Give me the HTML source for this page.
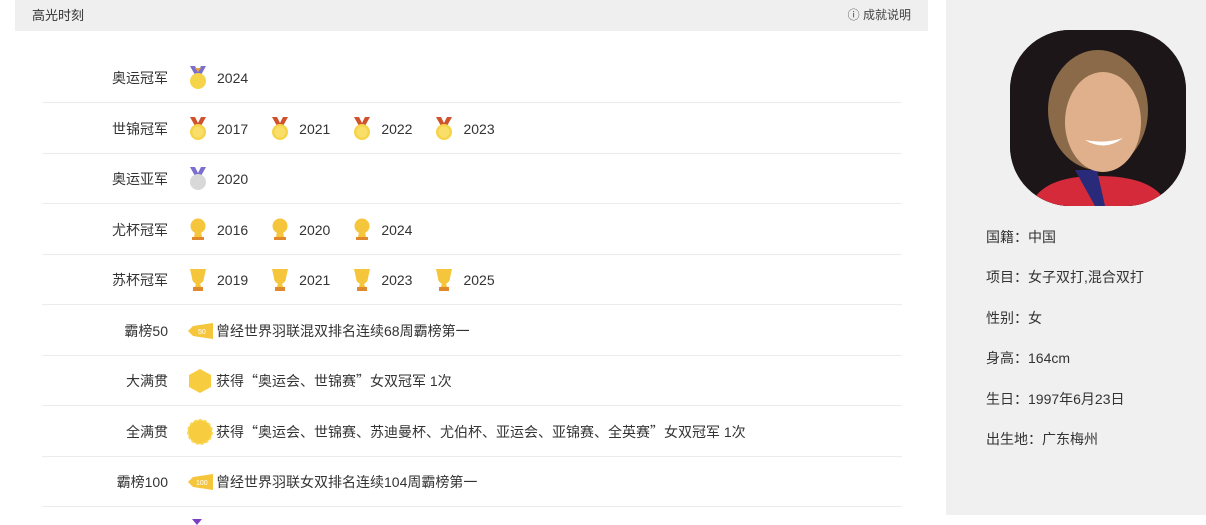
<!DOCTYPE html>
<html><head><meta charset="utf-8"><style>
*{margin:0;padding:0;box-sizing:border-box}
body{width:1206px;height:525px;background:#fff;position:relative;overflow:hidden;font-family:"Liberation Sans","Noto Sans CJK SC",sans-serif;color:#333;font-size:14px}
.q{font-family:"Noto Sans CJK SC",sans-serif}
.hd{position:absolute;left:15px;top:0;width:913px;height:31px;background:#efefef}
.hd .t{position:absolute;left:17px;top:5px;font-size:13px;color:#333}
.hd .r{position:absolute;right:17px;top:6px;font-size:12px;color:#444}
.row{position:absolute;left:42px;width:860px;height:50px;border-bottom:1px solid #ececec}
.lab{position:absolute;right:734px;top:50%;transform:translateY(-50%);white-space:nowrap}
.items{position:absolute;left:145px;top:50%;transform:translateY(-50%);display:flex;align-items:center;white-space:nowrap}
.it{display:flex;align-items:center;margin-right:21px}
.it svg{margin-right:8px}
.side{position:absolute;left:946px;top:0;width:260px;height:515px;background:#f0f0f0}
.ph{position:absolute;left:64px;top:30px;width:176px;height:176px;border-radius:60px;overflow:hidden;background:#1b1518}
.inf{position:absolute;left:40px;font-size:14px;color:#333}
</style></head><body>
<div class="hd"><span class="t">高光时刻</span><span class="r">ⓘ 成就说明</span></div>

<svg width="0" height="0" style="position:absolute"><defs>
<g id="gm"><path d="M3 0h5l3 6 3-6h5l-5 9h-6z" fill="#d0522d"/><circle cx="11" cy="15" r="8" fill="#f6d44a"/><circle cx="11" cy="15" r="5.5" fill="#f9df6a"/></g>
<g id="om"><path d="M3 0h5l3 6 3-6h5l-5 9h-6z" fill="#7a6fcf"/><path d="M8 2l3 4 3-4" fill="#e8a23a"/><circle cx="11" cy="15" r="8" fill="#f6d44a"/></g>
<g id="sm"><path d="M3 0h5l3 6 3-6h5l-5 9h-6z" fill="#7a6fcf"/><circle cx="11" cy="15" r="8" fill="#d8d8d8"/></g>
<g id="tc"><circle cx="11" cy="8" r="7.5" fill="#f5c63b"/><path d="M8 14h6l1 5H7z" fill="#f5c63b"/><rect x="5" y="19" width="12" height="3" fill="#e0882c"/></g>
<g id="sc"><path d="M3 1h16l-2 9a6 6 0 0 1-12 0z" fill="#f5c63b"/><path d="M9 15h4l1 4H8z" fill="#f5c63b"/><rect x="6" y="19" width="10" height="4" fill="#e0882c"/></g>
</defs></svg>

<div class="row" style="top:53px"><span class="lab">奥运冠军</span><div class="items"><span class="it"><svg width="22" height="24"><use href="#om"/></svg>2024</span></div></div>
<div class="row" style="top:104px"><span class="lab">世锦冠军</span><div class="items">
<span class="it"><svg width="22" height="24"><use href="#gm"/></svg>2017</span><span class="it"><svg width="22" height="24"><use href="#gm"/></svg>2021</span><span class="it"><svg width="22" height="24"><use href="#gm"/></svg>2022</span><span class="it"><svg width="22" height="24"><use href="#gm"/></svg>2023</span></div></div>
<div class="row" style="top:154px"><span class="lab">奥运亚军</span><div class="items"><span class="it"><svg width="22" height="24"><use href="#sm"/></svg>2020</span></div></div>
<div class="row" style="top:205px"><span class="lab">尤杯冠军</span><div class="items">
<span class="it"><svg width="22" height="24"><use href="#tc"/></svg>2016</span><span class="it"><svg width="22" height="24"><use href="#tc"/></svg>2020</span><span class="it"><svg width="22" height="24"><use href="#tc"/></svg>2024</span></div></div>
<div class="row" style="top:255px"><span class="lab">苏杯冠军</span><div class="items">
<span class="it"><svg width="22" height="24"><use href="#sc"/></svg>2019</span><span class="it"><svg width="22" height="24"><use href="#sc"/></svg>2021</span><span class="it"><svg width="22" height="24"><use href="#sc"/></svg>2023</span><span class="it"><svg width="22" height="24"><use href="#sc"/></svg>2025</span></div></div>
<div class="row" style="top:306px"><span class="lab">霸榜50</span><div class="items"><span class="it" style="margin-right:0"><svg width="26" height="16" style="margin-right:3px"><path d="M6 3l20-3v16L6 13 1 8z" fill="#f5c63b"/><text x="11" y="11" font-size="7" fill="#fff" font-family="Liberation Sans">50</text></svg>曾经世界羽联混双排名连续68周霸榜第一</span></div></div>
<div class="row" style="top:356px"><span class="lab">大满贯</span><div class="items"><span class="it" style="margin-right:0"><svg width="26" height="26" style="margin-right:3px"><path d="M13 1l11 6v12l-11 6-11-6V7z" fill="#f7cc3e"/></svg>获得<span class="q">“</span>奥运会、世锦赛<span class="q">”</span>女双冠军 1次</span></div></div>
<div class="row" style="top:407px"><span class="lab">全满贯</span><div class="items"><span class="it" style="margin-right:0"><svg width="26" height="26" style="margin-right:3px"><circle cx="13" cy="13" r="12" fill="#f7cc3e" stroke="#f9d95a" stroke-width="2" stroke-dasharray="3 2"/></svg>获得<span class="q">“</span>奥运会、世锦赛、苏迪曼杯、尤伯杯、亚运会、亚锦赛、全英赛<span class="q">”</span>女双冠军 1次</span></div></div>
<div class="row" style="top:457px"><span class="lab">霸榜100</span><div class="items"><span class="it" style="margin-right:0"><svg width="26" height="16" style="margin-right:3px"><path d="M6 3l20-3v16L6 13 1 8z" fill="#f5c63b"/><text x="9" y="11" font-size="7" fill="#fff" font-family="Liberation Sans">100</text></svg>曾经世界羽联女双排名连续104周霸榜第一</span></div></div>
<svg style="position:absolute;left:191px;top:519px" width="12" height="6"><path d="M1 0l5 6 5-6" fill="#7b3fc4"/></svg>

<div class="side">
<div class="ph"><svg width="176" height="176">
<rect width="176" height="176" fill="#1d1619"/>
<path d="M20 176c10-25 40-30 68-30s60 5 70 30z" fill="#d42a3a"/>
<path d="M65 140l20 36h10l-8-36z" fill="#2a2a7a"/>
<ellipse cx="88" cy="80" rx="50" ry="60" fill="#8a6a48"/>
<ellipse cx="93" cy="92" rx="38" ry="50" fill="#e0b08c"/>
<path d="M75 110q20 12 38 -2q-18 6 -38 2z" fill="#fff"/>
</svg></div>
<div class="inf" style="top:227px">国籍：中国</div>
<div class="inf" style="top:267px">项目：女子双打,混合双打</div>
<div class="inf" style="top:308px">性别：女</div>
<div class="inf" style="top:348px">身高：164cm</div>
<div class="inf" style="top:389px">生日：1997年6月23日</div>
<div class="inf" style="top:429px">出生地：广东梅州</div>
</div>
</body></html>
